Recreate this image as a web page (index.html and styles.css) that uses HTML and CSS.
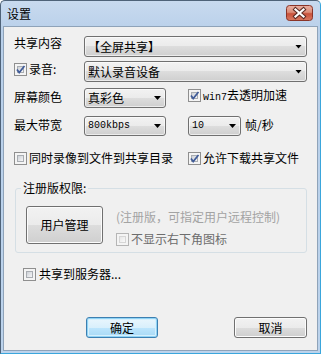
FILE: index.html
```html
<!DOCTYPE html>
<html lang="zh-CN">
  <head>
    <meta charset="UTF-8" />
    <meta name="viewport" content="width=device-width, initial-scale=1.0" />
    <title>设置</title>
    <link rel="stylesheet" href="styles.css">
  </head>
  <body>
    <div class="window">
      <div class="titlebar">
        <span class="title">设置</span>
        <span class="close">
          <svg width="27" height="16" viewBox="0 0 27 16">
            <defs>
              <linearGradient id="close-bg" x1="0" y1="0" x2="0" y2="1">
                <stop offset="0" stop-color="#eab0a3" />
                <stop offset="0.45" stop-color="#dc8d78" />
                <stop offset="0.55" stop-color="#c9513a" />
                <stop offset="1" stop-color="#d87a62" />
              </linearGradient>
            </defs>
            <rect x="0.5" y="0.5" width="26" height="15" rx="3" fill="url(#close-bg)" stroke="#8a3428" />
            <path d="M9.5 4.5 L17.5 11.5 M17.5 4.5 L9.5 11.5" stroke="#5a2a22" stroke-width="4.2" stroke-linecap="square" />
            <path d="M9.5 4.5 L17.5 11.5 M17.5 4.5 L9.5 11.5" stroke="#ffffff" stroke-width="2.2" stroke-linecap="square" />
          </svg>
        </span>
      </div>

      <div class="client">
        <div class="row r1">
          <span class="label">共享内容</span>
          <div class="combo w-wide"><span>【全屏共享】</span></div>
        </div>

        <div class="row r2">
          <label class="check label">
            <span class="cb"><svg width="11" height="11" viewBox="0 0 11 11"><path d="M2 5.5 L4.2 8.5 L9.5 2" fill="none" stroke="#3f5b98" stroke-width="1.7" /></svg></span>
            <span>录音:</span>
          </label>
          <div class="combo w-wide"><span>默认录音设备</span></div>
        </div>

        <div class="row r3">
          <span class="label">屏幕颜色</span>
          <div class="combo w-mid"><span>真彩色</span></div>
          <label class="check side">
            <span class="cb"><svg width="11" height="11" viewBox="0 0 11 11"><path d="M2 5.5 L4.2 8.5 L9.5 2" fill="none" stroke="#3f5b98" stroke-width="1.7" /></svg></span>
            <span><span class="mono">win7</span>去透明加速</span>
          </label>
        </div>

        <div class="row r4">
          <span class="label">最大带宽</span>
          <div class="combo w-mid"><span class="mono">800kbps</span></div>
          <div class="combo w-small"><span class="mono">10</span></div>
          <span class="unit">帧/秒</span>
        </div>

        <div class="row r5">
          <label class="check first">
            <span class="cb"></span>
            <span>同时录像到文件到共享目录</span>
          </label>
          <label class="check">
            <span class="cb"><svg width="11" height="11" viewBox="0 0 11 11"><path d="M2 5.5 L4.2 8.5 L9.5 2" fill="none" stroke="#3f5b98" stroke-width="1.7" /></svg></span>
            <span>允许下载共享文件</span>
          </label>
        </div>

        <fieldset class="group">
          <legend>注册版权限:</legend>
          <div class="group-body">
            <button type="button" class="btn big">用户管理</button>
            <div class="reg-info">
              <p class="hint">(注册版，可指定用户远程控制)</p>
              <label class="check disabled">
                <span class="cb"></span>
                <span>不显示右下角图标</span>
              </label>
            </div>
          </div>
        </fieldset>

        <label class="check server">
          <span class="cb"></span>
          <span>共享到服务器...</span>
        </label>

        <div class="actions">
          <button type="button" class="btn default">确定</button>
          <button type="button" class="btn cancel">取消</button>
        </div>
      </div>
    </div>
  </body>
</html>
```

FILE: styles.css
```css
body {
  margin: 0;
  font-family: "Noto Sans CJK SC", sans-serif;
  font-size: 12px;
  line-height: 14px;
  color: #000;
}

.window {
  width: 321px;
  height: 354px;
  box-sizing: border-box;
  display: flex;
  flex-direction: column;
  border: 1px solid #4f6379;
  border-right-color: #3aa6dc;
  border-bottom-color: #3aa6dc;
  border-radius: 5px 5px 0 0;
  padding: 0 2px 2px;
  background: linear-gradient(#c8daef, #b9d0ea 30px, #bcd3ec);
}

.titlebar {
  height: 25px;
  display: flex;
  align-items: flex-start;
}

.title {
  flex: 1;
  padding: 6px 0 0 4px;
}

.close {
  display: block;
  height: 16px;
  margin: 4px 5px 0 0;
}

.client {
  flex: 1;
  display: flex;
  flex-direction: column;
  align-items: flex-start;
  background: #f0f0f0;
  border: 1px solid #8fa3b9;
  padding: 9px 0 12px 10px;
}

.row {
  display: flex;
  align-items: flex-start;
}

.label {
  width: 70px;
  flex: none;
}

.r2 {
  margin-top: 4px;
}

.r2 .check {
  margin-top: 1px;
}

.r3 {
  margin-top: 6px;
}

.r3 .label,
.r4 .label {
  padding-top: 2px;
}

.r4 {
  margin-top: 8px;
}

.r5 {
  margin-top: 15px;
}

.combo {
  box-sizing: border-box;
  height: 21px;
  display: flex;
  align-items: center;
  justify-content: space-between;
  padding: 0 4px 0 3px;
  border: 1px solid #707070;
  border-radius: 3px;
  background: linear-gradient(#f2f2f2, #ebebeb 50%, #dddddd 50%, #cfcfcf);
  box-shadow: inset 0 0 0 1px rgba(255, 255, 255, 0.6);
}

.combo::after {
  content: "";
  width: 7px;
  height: 4px;
  background: #000;
  clip-path: polygon(0 0, 100% 0, 50% 100%);
}

.w-wide {
  width: 223px;
}

.w-mid {
  width: 82px;
  height: 20px;
}

.w-small {
  width: 53px;
  height: 20px;
  margin-left: 22px;
}

.mono {
  font-family: "Liberation Mono", monospace;
  font-size: 10px;
}

.unit {
  margin-left: 4px;
  padding-top: 2px;
}

.check {
  display: flex;
  align-items: flex-start;
  gap: 2px;
}

.check .cb {
  margin-top: 1px;
}

.side {
  margin-left: 22px;
}

.first {
  width: 174px;
}

.cb {
  flex: none;
  display: grid;
  width: 13px;
  height: 13px;
  box-sizing: border-box;
  border: 1px solid #8f8f8f;
  padding: 2px;
  background: #f4f4f4;
}

.cb::before {
  content: "";
  grid-area: 1 / 1;
  border: 1px solid #a9adb2;
  background: linear-gradient(135deg, #cdd1d7, #f6f6f7);
}

.cb svg {
  grid-area: 1 / 1;
  margin: -2px;
}

.group {
  margin: 16px 0 0 1px;
  width: 292px;
  min-width: 0;
  box-sizing: border-box;
  padding: 11px 10px 6px 10px;
  border: 1px solid #d5dfe5;
  border-radius: 3px;
}

.group legend {
  padding: 0 2px;
  margin-left: -5px;
}

.group-body {
  display: flex;
}

.reg-info {
  margin-left: 13px;
  padding-top: 4px;
}

.hint {
  margin: 0;
  color: #a3a3a3;
}

.reg-info .check {
  margin-top: 8px;
}

.disabled {
  color: #6d6d6d;
}

.disabled .cb {
  border-color: #b5b5b5;
}

.disabled .cb::before {
  border-color: #d6d6d6;
  background: linear-gradient(135deg, #e6e6e6, #fafafa);
}

.server {
  margin: 14px 0 0 9px;
  gap: 3px;
}

.actions {
  margin-top: auto;
  display: flex;
}

.btn {
  box-sizing: border-box;
  height: 21px;
  padding: 0;
  font: inherit;
  color: #000;
  border: 1px solid #707070;
  border-radius: 3px;
  background: linear-gradient(#f2f2f2, #ebebeb 50%, #dddddd 50%, #cfcfcf);
  box-shadow: inset 0 0 0 1px #fcfcfc;
}

.btn.big {
  width: 77px;
  height: 38px;
}

.btn.default {
  width: 72px;
  margin-left: 72px;
  border-color: #3c7fb1;
  background: linear-gradient(#eaf6fd, #d9f0fc 50%, #bee6fd 50%, #a7d9f5);
  box-shadow: inset 0 0 0 1px #8fd3f5, inset 0 0 0 2px #d6f0fd;
}

.btn.cancel {
  width: 73px;
  margin-left: 76px;
}
```
